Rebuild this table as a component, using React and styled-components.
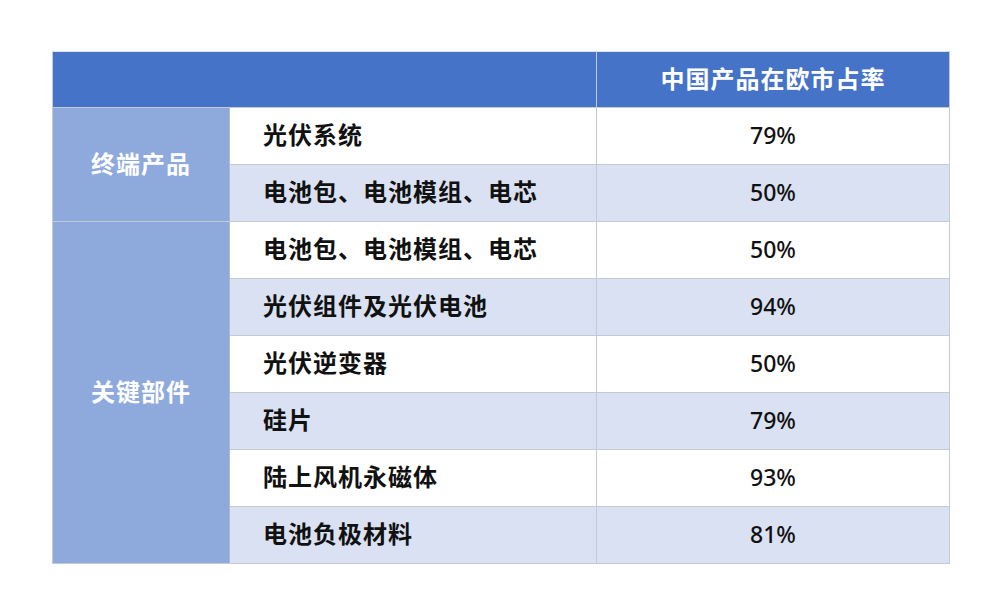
import React from 'react';
import styled, { createGlobalStyle } from 'styled-components';

const GlobalStyle = createGlobalStyle`
  html, body {
    margin: 0;
    padding: 0;
    background: #fff;
  }
  body {
    font-family: "Noto Sans CJK SC", "Noto Sans", sans-serif;
  }
`;

const Page = styled.div`
  width: 1000px;
  height: 613px;
  padding: 51px 0 0 52px;
  box-sizing: border-box;
`;

const Table = styled.table`
  border-collapse: collapse;
  table-layout: fixed;
  width: 897px;
`;

const HeadRow = styled.tr`
  height: 56px;
  background: #4573c7;
`;

const HeadCell = styled.th`
  padding: 0 0 4px;
  color: #fff;
  font-size: 24px;
  font-weight: 700;
  letter-spacing: 1px;
  text-align: center;
  border: 1px solid #c3cad6;
  border-top-color: #dde3ee;
`;

const Row = styled.tr`
  height: 57px;
  background: ${p => (p.shaded ? '#d9e1f2' : '#ffffff')};
`;

const GroupCell = styled.td`
  padding: 0 0 4px;
  background: #8eaadc;
  color: #fff;
  font-size: 24px;
  font-weight: 700;
  letter-spacing: 1px;
  text-align: center;
  border: 1px solid #c3cad6;
  border-right-color: #b0b8cc;
`;

const NameCell = styled.td`
  padding: 0 0 5px 33px;
  color: #111;
  font-size: 24px;
  font-weight: 700;
  letter-spacing: 1px;
  border: 1px solid #c3cad6;
`;

const ValueCell = styled.td`
  padding: 0 0 3px;
  color: #111;
  font-family: "Noto Sans", "Noto Sans CJK SC", sans-serif;
  font-size: 23px;
  font-weight: 500;
  text-align: center;
  border: 1px solid #c3cad6;
`;

const groups = [
  {
    label: '终端产品',
    items: [
      ['光伏系统', '79%'],
      ['电池包、电池模组、电芯', '50%'],
    ],
  },
  {
    label: '关键部件',
    items: [
      ['电池包、电池模组、电芯', '50%'],
      ['光伏组件及光伏电池', '94%'],
      ['光伏逆变器', '50%'],
      ['硅片', '79%'],
      ['陆上风机永磁体', '93%'],
      ['电池负极材料', '81%'],
    ],
  },
];

export default function App() {
  let index = 0;
  return (
    <>
      <GlobalStyle />
      <Page>
        <Table>
          <colgroup>
            <col style={{ width: 177 }} />
            <col style={{ width: 367 }} />
            <col style={{ width: 353 }} />
          </colgroup>
          <thead>
            <HeadRow>
              <HeadCell colSpan={2} />
              <HeadCell>中国产品在欧市占率</HeadCell>
            </HeadRow>
          </thead>
          <tbody>
            {groups.map(group =>
              group.items.map(([name, value], i) => {
                const shaded = index % 2 === 1;
                index += 1;
                return (
                  <Row key={`${group.label}-${i}`} shaded={shaded}>
                    {i === 0 && (
                      <GroupCell rowSpan={group.items.length}>{group.label}</GroupCell>
                    )}
                    <NameCell>{name}</NameCell>
                    <ValueCell>{value}</ValueCell>
                  </Row>
                );
              })
            )}
          </tbody>
        </Table>
      </Page>
    </>
  );
}
